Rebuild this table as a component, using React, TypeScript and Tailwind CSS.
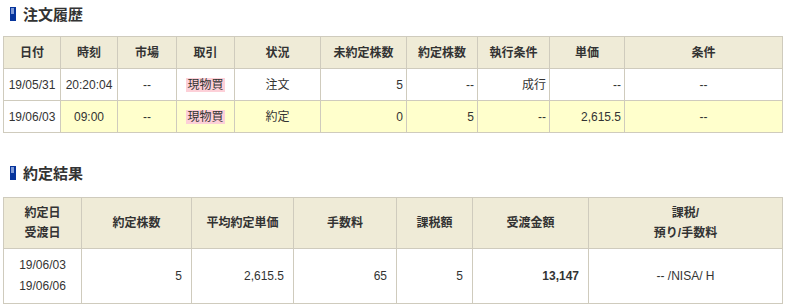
import React from "react";

const font = { fontFamily: '"Liberation Sans", "Noto Sans CJK JP", sans-serif' };

function SectionTitle({ text }: { text: string }) {
  return (
    <div className="flex items-center gap-[7px] pl-[10px] h-[28px]">
      <div className="w-[6px] h-[14px] bg-[#06349c] p-[1px]">
        <div className="w-[3px] h-[6px] bg-[#7f9ad6]" />
      </div>
      <span className="text-[15px] font-bold text-[#333] leading-none">{text}</span>
    </div>
  );
}

const th = "border border-[#cfcbbd] bg-[#efebd7] font-bold text-[12px] text-[#333] text-center";
const td = "border border-[#cfcbbd] text-[12px] text-[#333]";

function Pink({ children }: { children: React.ReactNode }) {
  return <span className="bg-[#fdd0d8] px-[1px]">{children}</span>;
}

const orderCols = [57, 57, 59, 58, 86, 86, 71, 72, 75, 158];
const resultCols = [78, 110, 102, 103, 76, 116, 194];

export default function App() {
  return (
    <div className="w-[786px] h-[307px] bg-white overflow-hidden" style={font}>
      <div>
        <SectionTitle text="注文履歴" />
      </div>
      <div className="pl-[3px] pt-[8px]">
        <table className="table-fixed border-collapse w-[779px]">
          <colgroup>
            {orderCols.map((w, i) => (
              <col key={i} style={{ width: w }} />
            ))}
          </colgroup>
          <thead>
            <tr className="h-[32px]">
              <th className={th}>日付</th>
              <th className={th}>時刻</th>
              <th className={th}>市場</th>
              <th className={th}>取引</th>
              <th className={th}>状況</th>
              <th className={th}>未約定株数</th>
              <th className={th}>約定株数</th>
              <th className={th}>執行条件</th>
              <th className={th}>単価</th>
              <th className={th}>条件</th>
            </tr>
          </thead>
          <tbody>
            <tr className="h-[32px]">
              <td className={`${td} text-center`}>19/05/31</td>
              <td className={`${td} text-center`}>20:20:04</td>
              <td className={`${td} text-center`}>--</td>
              <td className={`${td} text-center`}><Pink>現物買</Pink></td>
              <td className={`${td} text-center`}>注文</td>
              <td className={`${td} text-right pr-[3px]`}>5</td>
              <td className={`${td} text-right pr-[3px]`}>--</td>
              <td className={`${td} text-right pr-[3px]`}>成行</td>
              <td className={`${td} text-right pr-[3px]`}>--</td>
              <td className={`${td} text-center`}>--</td>
            </tr>
            <tr className="h-[32px]">
              <td className={`${td} text-center`}>19/06/03</td>
              <td className={`${td} text-center bg-[#ffffcc]`}>09:00</td>
              <td className={`${td} text-center bg-[#ffffcc]`}>--</td>
              <td className={`${td} text-center bg-[#ffffcc]`}><Pink>現物買</Pink></td>
              <td className={`${td} text-center bg-[#ffffcc]`}>約定</td>
              <td className={`${td} text-right pr-[3px] bg-[#ffffcc]`}>0</td>
              <td className={`${td} text-right pr-[3px] bg-[#ffffcc]`}>5</td>
              <td className={`${td} text-right pr-[3px] bg-[#ffffcc]`}>--</td>
              <td className={`${td} text-right pr-[3px] bg-[#ffffcc]`}>2,615.5</td>
              <td className={`${td} text-center bg-[#ffffcc]`}>--</td>
            </tr>
          </tbody>
        </table>
      </div>
      <div className="pt-[26px]">
        <SectionTitle text="約定結果" />
      </div>
      <div className="pl-[3px] pt-[10px]">
        <table className="table-fixed border-collapse w-[779px]">
          <colgroup>
            {resultCols.map((w, i) => (
              <col key={i} style={{ width: w }} />
            ))}
          </colgroup>
          <thead>
            <tr className="h-[51px]">
              <th className={`${th} leading-[20px]`}>約定日<br />受渡日</th>
              <th className={th}>約定株数</th>
              <th className={th}>平均約定単価</th>
              <th className={th}>手数料</th>
              <th className={th}>課税額</th>
              <th className={th}>受渡金額</th>
              <th className={`${th} leading-[20px]`}>課税/<br />預り/手数料</th>
            </tr>
          </thead>
          <tbody>
            <tr className="h-[55px]">
              <td className={`${td} text-center leading-[21px]`}>19/06/03<br />19/06/06</td>
              <td className={`${td} text-right pr-[9px]`}>5</td>
              <td className={`${td} text-right pr-[9px]`}>2,615.5</td>
              <td className={`${td} text-right pr-[9px]`}>65</td>
              <td className={`${td} text-right pr-[9px]`}>5</td>
              <td className={`${td} text-right pr-[9px] font-bold`}>13,147</td>
              <td className={`${td} text-center`}>-- /NISA/ H</td>
            </tr>
          </tbody>
        </table>
      </div>
    </div>
  );
}
